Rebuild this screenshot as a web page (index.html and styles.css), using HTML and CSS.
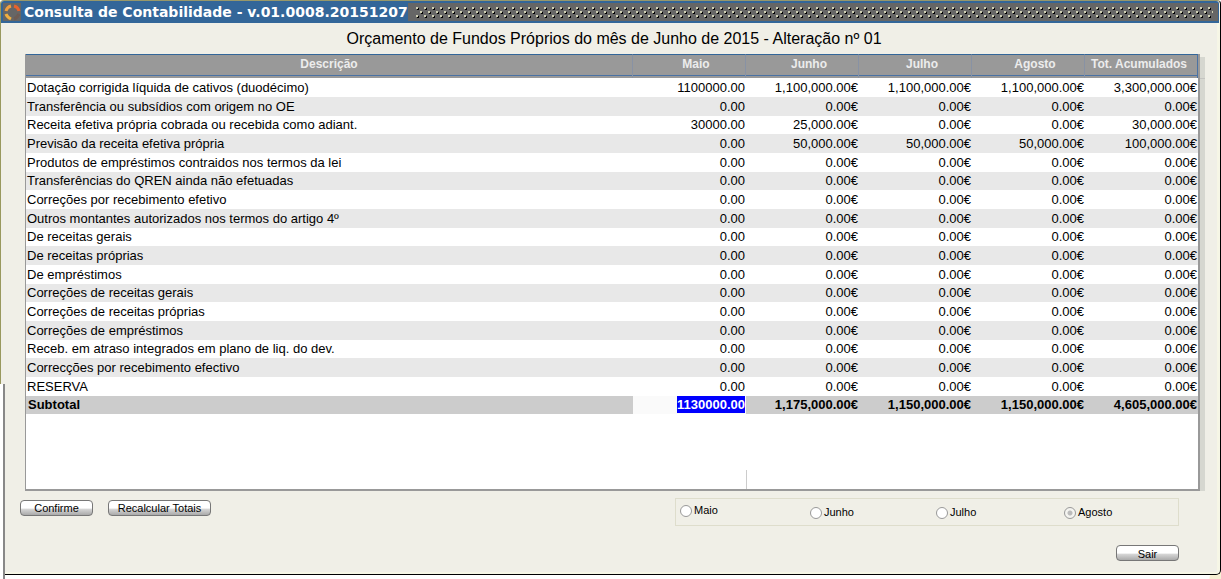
FILE: index.html
```html
<!DOCTYPE html>
<html lang="pt">
<head>
<meta charset="utf-8">
<title>Consulta de Contabilidade</title>
<link rel="stylesheet" href="styles.css">
</head>
<body>
<main class="window">
  <header class="titlebar">
    <svg class="logo" viewBox="0 0 18 18" aria-hidden="true">
      <rect width="18" height="18" fill="#666"/>
      <g fill="none" stroke-width="3">
        <path d="M3 8Q4 4 8 3" stroke="#f0a040"/>
        <path d="M11 3Q15 4 16 8" stroke="#e8622c"/>
        <path d="M3 11Q4 14 8 16" stroke="#f0b040"/>
        <path d="M11 16Q14 15 16 11" stroke="#6e5c54"/>
      </g>
    </svg>
    <h1 class="titlebar-text">Consulta de Contabilidade - v.01.0008.20151207</h1>
    <div class="grip">
      <svg class="grip-dots" aria-hidden="true">
        <defs>
          <pattern id="dots" width="8" height="8" patternUnits="userSpaceOnUse">
            <path d="M2 1h1v2h-2v-1h1zM6 5h1v2h-2v-1h1z" fill="#000"/>
            <path d="M0 0h2v2h-2zM4 4h2v2h-2z" fill="#d0d0b4"/>
          </pattern>
        </defs>
        <rect width="100%" height="100%" fill="url(#dots)"/>
      </svg>
    </div>
  </header>
  <div class="content">
    <h2 class="heading">Orçamento de Fundos Próprios do mês de Junho de 2015 - Alteração nº 01</h2>
    <div class="grid-frame">
      <div class="grid">
        <table class="budget">
          <thead>
            <tr><th class="desc">Descrição</th><th>Maio</th><th>Junho</th><th>Julho</th><th>Agosto</th><th class="total">Tot. Acumulados</th></tr>
          </thead>
          <tbody>
            <tr><td>Dotação corrigida líquida de cativos (duodécimo)</td><td>1100000.00</td><td>1,100,000.00€</td><td>1,100,000.00€</td><td>1,100,000.00€</td><td>3,300,000.00€</td></tr>
            <tr><td>Transferência ou subsídios com origem no OE</td><td>0.00</td><td>0.00€</td><td>0.00€</td><td>0.00€</td><td>0.00€</td></tr>
            <tr><td>Receita efetiva própria cobrada ou recebida como adiant.</td><td>30000.00</td><td>25,000.00€</td><td>0.00€</td><td>0.00€</td><td>30,000.00€</td></tr>
            <tr><td>Previsão da receita efetiva própria</td><td>0.00</td><td>50,000.00€</td><td>50,000.00€</td><td>50,000.00€</td><td>100,000.00€</td></tr>
            <tr><td>Produtos de empréstimos contraidos nos termos da lei</td><td>0.00</td><td>0.00€</td><td>0.00€</td><td>0.00€</td><td>0.00€</td></tr>
            <tr><td>Transferências do QREN ainda não efetuadas</td><td>0.00</td><td>0.00€</td><td>0.00€</td><td>0.00€</td><td>0.00€</td></tr>
            <tr><td>Correções por recebimento efetivo</td><td>0.00</td><td>0.00€</td><td>0.00€</td><td>0.00€</td><td>0.00€</td></tr>
            <tr><td>Outros montantes autorizados nos termos do artigo 4º</td><td>0.00</td><td>0.00€</td><td>0.00€</td><td>0.00€</td><td>0.00€</td></tr>
            <tr><td>De receitas gerais</td><td>0.00</td><td>0.00€</td><td>0.00€</td><td>0.00€</td><td>0.00€</td></tr>
            <tr><td>De receitas próprias</td><td>0.00</td><td>0.00€</td><td>0.00€</td><td>0.00€</td><td>0.00€</td></tr>
            <tr><td>De empréstimos</td><td>0.00</td><td>0.00€</td><td>0.00€</td><td>0.00€</td><td>0.00€</td></tr>
            <tr><td>Correções de receitas gerais</td><td>0.00</td><td>0.00€</td><td>0.00€</td><td>0.00€</td><td>0.00€</td></tr>
            <tr><td>Correções de receitas próprias</td><td>0.00</td><td>0.00€</td><td>0.00€</td><td>0.00€</td><td>0.00€</td></tr>
            <tr><td>Correções de empréstimos</td><td>0.00</td><td>0.00€</td><td>0.00€</td><td>0.00€</td><td>0.00€</td></tr>
            <tr><td>Receb. em atraso integrados em plano de liq. do dev.</td><td>0.00</td><td>0.00€</td><td>0.00€</td><td>0.00€</td><td>0.00€</td></tr>
            <tr><td>Correcções por recebimento efectivo</td><td>0.00</td><td>0.00€</td><td>0.00€</td><td>0.00€</td><td>0.00€</td></tr>
            <tr><td>RESERVA</td><td>0.00</td><td>0.00€</td><td>0.00€</td><td>0.00€</td><td>0.00€</td></tr>
            <tr class="subtotal"><td>Subtotal</td><td class="editing"><span class="selected">1130000.00</span></td><td>1,175,000.00€</td><td>1,150,000.00€</td><td>1,150,000.00€</td><td>4,605,000.00€</td></tr>
          </tbody>
        </table>
        <div class="grid-rest"><div class="grid-tick"></div></div>
      </div>
      <div class="scroll-track"></div>
    </div>
    <div class="controls">
      <div class="buttons">
        <button type="button" class="btn btn-confirm">Confirme</button>
        <button type="button" class="btn btn-recalc">Recalcular Totais</button>
      </div>
      <fieldset class="months">
        <label class="month month-first"><input type="radio" name="mes">Maio</label>
        <label class="month"><input type="radio" name="mes">Junho</label>
        <label class="month"><input type="radio" name="mes">Julho</label>
        <label class="month"><input type="radio" name="mes" checked>Agosto</label>
      </fieldset>
    </div>
    <div class="footer"><button type="button" class="btn btn-exit">Sair</button></div>
  </div>
  <div class="edge"></div>
</main>
</body>
</html>
```

FILE: styles.css
```css
* { box-sizing: border-box; }

body {
  min-height: 100vh;
  margin: 0;
  background: radial-gradient(circle at 100% 100%, #f7f0d4 11px, #fff 12px);
  color: #000;
  font-family: "Liberation Sans", Arial, sans-serif;
  font-size: 13px;
}

.window {
  position: relative;
  border: 1px solid #000;
  border-top-color: #98986a;
  border-left-color: #98985e;
  border-radius: 4px 4px 5px 0;
  background: #f0efe7;
  box-shadow: inset -3px 0 #f6f6e6, inset 0 -2px #f6f6e6;
}

.titlebar {
  display: flex;
  align-items: center;
  height: 22px;
  margin-right: 1px;
  padding: 0 1px 0 2px;
  border-radius: 3px 3px 0 0;
  background: #336699;
}

.logo { flex: none; width: 18px; height: 18px; }

.titlebar-text {
  margin: 0 0 0 3px;
  color: #fff;
  font: bold 14px/18px "DejaVu Sans", Verdana, sans-serif;
  white-space: nowrap;
}

.grip {
  flex: 1;
  height: 18px;
  padding: 4px 5px 3px 8px;
  background: #666;
}

.grip-dots { display: block; width: 100%; height: 11px; }

.content { padding: 7px 15px 13px 24px; }

.heading {
  margin: 0;
  padding-right: 2px;
  font-size: 16px;
  font-weight: normal;
  line-height: 18px;
  text-align: center;
}

.grid-frame { display: flex; margin-top: 6px; }

.grid {
  flex: 1;
  border: solid #999;
  border-width: 0 2px 2px 1px;
  background: #fff;
}

.budget {
  width: 100%;
  border-collapse: separate;
  border-spacing: 0;
  table-layout: fixed;
  line-height: 17px;
}

.budget th {
  width: 113px;
  height: 24px;
  padding: 0 0 5px 14px;
  border-top: 1px solid #336699;
  border-right: 1px solid #8892a4;
  background: linear-gradient(#999 20px, #4a72a4 20px, #4a72a4 21px, #999 21px);
  color: #ececec;
  font-size: 12px;
  line-height: 17px;
  white-space: nowrap;
}

.budget th.desc { width: auto; padding-left: 0; }
.budget th.total { padding: 0 4px 5px 0; border-right-color: #4a72a4; }

.budget td {
  height: 19px;
  padding: 0 1px 1px;
  text-align: right;
  white-space: nowrap;
}

.budget td:first-child { text-align: left; }
.budget tr:nth-child(3n) td { height: 18px; }
.budget tbody tr:nth-child(even) { background: #e8e8e8; }
.budget tbody tr.subtotal { background: #ccc; font-weight: bold; }
.budget tr.subtotal td:first-child { padding-left: 2px; }
.budget td.editing { background: #fafafa; }

.selected { display: inline-block; background: #00f; color: #fff; }

.grid-rest {
  display: flex;
  justify-content: flex-end;
  align-items: flex-end;
  height: 75px;
}

.grid-tick { width: 452px; height: 19px; border-left: 1px solid #ccc; }

.scroll-track {
  width: 5px;
  margin-top: 3px;
  background: linear-gradient(#d6d7d0 21px, #c4c4c0 21px, #c4c4c0 22px, #d6d7d0 22px);
}

.controls {
  display: flex;
  justify-content: space-between;
  margin: 7px 26px 0 -5px;
}

.buttons { display: flex; gap: 15px; padding-top: 2px; }

.btn {
  height: 16px;
  padding: 0;
  border: 1px solid #777;
  border-radius: 4px;
  background: linear-gradient(#fff 50%, #d4d4d4 60%, #aaa);
  color: #000;
  font-family: "Liberation Sans", Arial, sans-serif;
  font-size: 11px;
  line-height: 14px;
}

.btn-confirm { width: 73px; }
.btn-recalc { width: 103px; }
.btn-exit { width: 63px; padding-top: 1px; }

.months {
  display: grid;
  grid-template-columns: 130px 126px 128px auto;
  align-items: center;
  width: 504px;
  height: 28px;
  margin: 0 0 1px;
  padding: 0 0 0 4px;
  border: 1px solid #deddcc;
}

.month { display: flex; align-items: center; gap: 2px; font-size: 11px; }
.month-first { padding-bottom: 4px; }

.month input {
  appearance: none;
  width: 12px;
  height: 12px;
  margin: 2px 0 0;
  border: 1px solid #999;
  border-radius: 50%;
  background: #fff;
}

.month input:checked { background: radial-gradient(#bbb 2px, #f4f4f0 3px); }

.footer { display: flex; justify-content: flex-end; margin: 18px 26px 0 0; }

.edge {
  position: absolute;
  left: -1px;
  top: 383px;
  bottom: -5px;
  width: 5px;
  border-right: 2px solid #888;
  background: #fff;
}
```
